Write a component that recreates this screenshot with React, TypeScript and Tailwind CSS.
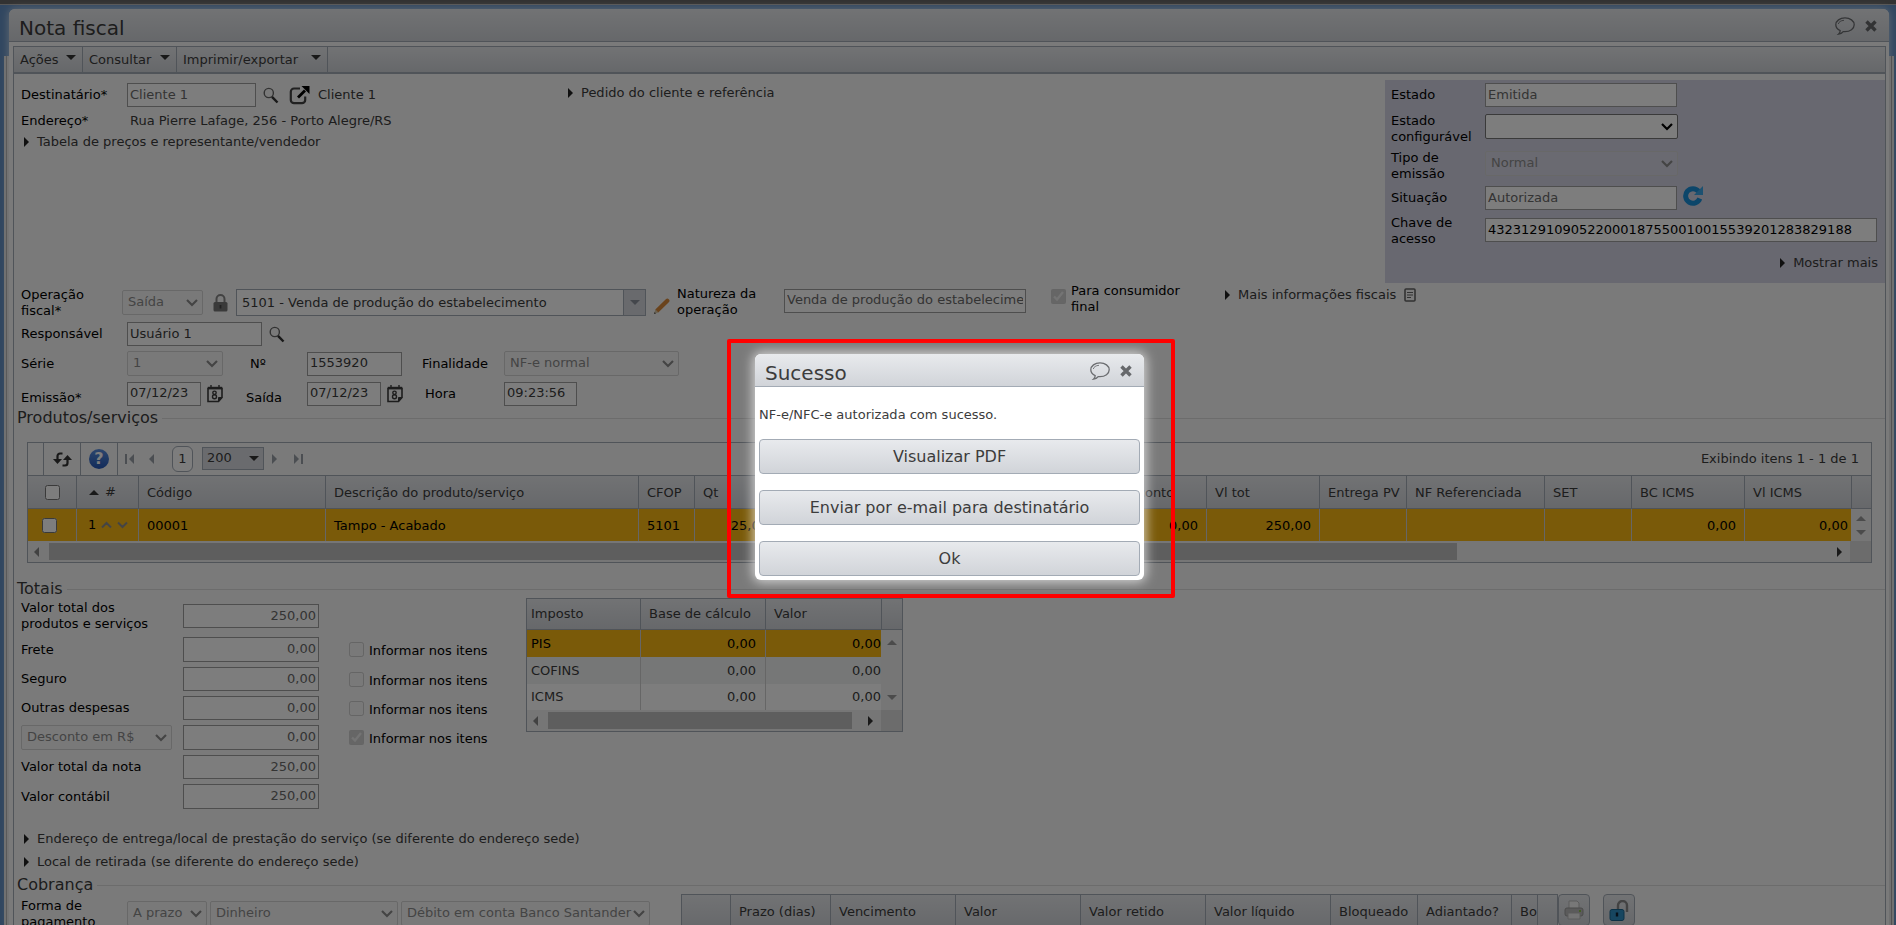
import { ReactNode, SelectHTMLAttributes, InputHTMLAttributes } from "react"
import { clsx } from "clsx"

const HEADER_BG = "bg-linear-to-b from-[#e8eaed] to-[#d1d4d9]"

/* ---------- icons ---------- */

function ChatIcon() {
  return (
    <svg width="20" height="18" viewBox="0 0 20 18" fill="none" stroke="#6b6d70" strokeWidth="1.3" aria-hidden="true">
      <path d="M5.2 13.6C2.4 12.3.8 10.300.8 7.800.8 3.900 4.900.9 10 .9s9.200 3 9.200 6.900-4.100 6.900-9.200 6.900c-.6 0-1.200 0-1.800-.1-1 1.300-2.500 2.300-4.700 2.600 1.200-1.100 1.700-2.200 1.700-3.600z" />
      <path d="M3.300 7c.4-2 2.600-3.500 5.700-3.700" strokeWidth=".9" />
    </svg>
  )
}

function CloseIcon() {
  return (
    <svg width="12" height="12" viewBox="0 0 12 12" stroke="#66686b" strokeWidth="3.4" aria-hidden="true">
      <path d="M1.500 1.500l9 9M10.500 1.500l-9 9" />
    </svg>
  )
}

function SearchIcon() {
  return (
    <svg width="16" height="17" viewBox="0 0 16 17" fill="none" aria-hidden="true">
      <circle cx="5.800" cy="6" r="4.600" stroke="#666" strokeWidth="1.400" />
      <path d="M9 9.800l5.500 5.700" stroke="#333" strokeWidth="2.400" />
    </svg>
  )
}

function ExternalIcon() {
  return (
    <svg width="21" height="19" viewBox="0 0 21 19" fill="none" aria-hidden="true">
      <path d="M11 2.500H5a3.200 3.200 0 0 0-3.200 3.200V14A3.200 3.200 0 0 0 5 17.200h8a3.200 3.200 0 0 0 3.200-3.200v-3.500" stroke="#444" strokeWidth="2.200" />
      <path d="M9 11.500l7-7" stroke="#000" strokeWidth="2.800" />
      <path d="M12.500 0H20.500V8z" fill="#000" />
    </svg>
  )
}

function CalendarIcon() {
  return (
    <svg width="16" height="18" viewBox="0 0 16 18" fill="none" stroke="#3c3c3c" aria-hidden="true">
      <path d="M1 3.500h14v9L11.500 16.500H1z" strokeWidth="1.600" />
      <path d="M.8 3h14.400" strokeWidth="2.400" />
      <path d="M4 0v4M12 0v4" strokeWidth="1.400" />
      <path d="M15 12.500h-3.500v4z" fill="#3c3c3c" />
      <circle cx="7.500" cy="7.800" r="1.700" strokeWidth="1.400" />
      <circle cx="7.500" cy="11.700" r="2" strokeWidth="1.400" />
    </svg>
  )
}

function LockIcon() {
  return (
    <svg width="15" height="18" viewBox="0 0 15 18" aria-hidden="true">
      <path d="M3.500 9V5a4 4 0 0 1 8 0v4" fill="none" stroke="#888" strokeWidth="2" />
      <rect x=".5" y="8" width="14" height="9.500" rx="1.500" fill="#777" />
      <path d="M7.500 11v3.500" stroke="#444" strokeWidth="1.800" />
    </svg>
  )
}

function PencilIcon() {
  return (
    <svg width="18" height="17" viewBox="0 0 18 17" aria-hidden="true">
      <path d="M1 16l1.300-4.500 3 3z" fill="#d8c9a8" />
      <path d="M1 16l.6-2 1.400 1.400z" fill="#555" />
      <path d="M2.300 11.500L12.800 1.200a2 2 0 0 1 3 3L5.300 14.500z" fill="#d88a3a" />
    </svg>
  )
}

function RefreshBlueIcon() {
  return (
    <svg width="20" height="20" viewBox="0 0 20 20" fill="none" aria-hidden="true">
      <path d="M15.600 5.300A7.300 7.300 0 1 0 16.800 12.500" stroke="#1a8fd8" strokeWidth="5" />
      <path d="M20 0v9h-9z" fill="#3aa5e6" />
    </svg>
  )
}

function ReloadIcon() {
  return (
    <svg width="19" height="16" viewBox="0 0 19 16" fill="none" stroke="#333" strokeWidth="2.200" aria-hidden="true">
      <path d="M9.500 2.500H7A2.500 2.500 0 0 0 4.500 5v5" />
      <path d="M0 8h9l-4.500 5z" fill="#333" stroke="none" />
      <path d="M9.500 14.500H12a2.500 2.500 0 0 0 2.500-2.500V7" />
      <path d="M10 9h9l-4.500-5z" fill="#333" stroke="none" />
    </svg>
  )
}

function HelpIcon() {
  return (
    <span className="flex size-5 items-center justify-center rounded-full bg-linear-to-b from-[#5b8fe0] to-[#2458b8] text-base font-bold leading-5 text-white">
      ?
    </span>
  )
}

function NoteIcon() {
  return (
    <svg width="12" height="14" viewBox="0 0 12 14" fill="none" stroke="#666" aria-hidden="true">
      <rect x="1" y="1" width="10" height="12" rx="1" strokeWidth="1.600" />
      <path d="M3 4.500h6M3 7h6M3 9.500h4" />
    </svg>
  )
}

function PrinterIcon() {
  return (
    <svg width="20" height="20" viewBox="0 0 20 20" aria-hidden="true">
      <path d="M5 1h8l2 2v6H5z" fill="#f4f4f4" stroke="#bbb" />
      <rect x="1" y="8" width="18" height="8" rx="2" fill="#b9b9b9" stroke="#999" />
      <path d="M4 13h12v6H4z" fill="#ededed" stroke="#bbb" />
      <rect x="15" y="10" width="2" height="2" fill="#8bc34a" />
    </svg>
  )
}

function UnlockIcon() {
  return (
    <svg width="20" height="21" viewBox="0 0 20 21" aria-hidden="true">
      <path d="M9 10V5.500a4.500 4.500 0 0 1 9 0V12" fill="none" stroke="#8a8a8a" strokeWidth="2.400" />
      <rect x="1" y="9.500" width="14" height="11" rx="2" fill="#2f8fc4" stroke="#1c6690" />
      <path d="M8 12.500v4" stroke="#123" strokeWidth="2.400" />
    </svg>
  )
}

type Dir = "up" | "down" | "left" | "right"

const TRIANGLES: Record<Dir, string> = {
  up: "M0 5h10L5 0z",
  down: "M0 0h10L5 5z",
  left: "M5 0v10L0 5z",
  right: "M0 0v10l5-5z",
}

function Triangle({ dir, color = "#333" }: { dir: Dir; color?: string }) {
  const flat = dir === "up" || dir === "down"
  return (
    <svg width={flat ? 10 : 5} height={flat ? 5 : 10} viewBox={flat ? "0 0 10 5" : "0 0 5 10"} className="shrink-0" aria-hidden="true">
      <path d={TRIANGLES[dir]} fill={color} />
    </svg>
  )
}

/* ---------- form pieces ---------- */

function TextField({ className, ...props }: InputHTMLAttributes<HTMLInputElement>) {
  return <input type="text" readOnly className={clsx("h-6 shrink-0 border border-[#a0a0a0] bg-white px-0.5 pb-0.5", className)} {...props} />
}

function Select({ className, children, disabled, ...props }: SelectHTMLAttributes<HTMLSelectElement>) {
  return (
    <span className={clsx("relative flex h-[25px] shrink-0", className)}>
      <select
        disabled={disabled}
        className="w-full appearance-none rounded-xs border border-[#767676] bg-white pb-0.5 pl-[5px] pr-4 disabled:border-[#d4d4d4] disabled:bg-[#f0f0f0]/20 disabled:text-[#8c8c8c]"
        {...props}
      >
        {children}
      </select>
      <svg width="12" height="8" viewBox="0 0 12 8" fill="none" className="pointer-events-none absolute right-[5px] top-[9px]" aria-hidden="true">
        <path d="M1 1l5 5 5-5" stroke={disabled ? "#8c8c8c" : "#000"} strokeWidth="2.200" />
      </svg>
    </span>
  )
}

function Expander({ children, className }: { children: ReactNode; className?: string }) {
  return (
    <button type="button" className={clsx("flex items-center gap-2 text-[#3c3c3c]", className)}>
      <Triangle dir="right" color="#222" />
      {children}
    </button>
  )
}

function Legend({ children, className }: { children: ReactNode; className?: string }) {
  return (
    <div className={clsx("flex h-5 items-center gap-1 pl-[3px]", className)}>
      <h2 className="text-base leading-5 text-[#3c3c3c]">{children}</h2>
      <div className="h-px flex-1 bg-[#dcdcdc]" />
    </div>
  )
}

function WindowTitle({ title }: { title: string }) {
  return (
    <header className={clsx("flex h-[33px] items-center border-b border-[#a3abb5] px-2.5 text-[#3c3c3c]", HEADER_BG)}>
      <h1 className="mt-1.5 flex-1 text-xl leading-6">{title}</h1>
      <button type="button" aria-label="Comentar" className="mr-2.5 mt-px"><ChatIcon /></button>
      <button type="button" aria-label="Fechar" className="mr-0.5 mt-px"><CloseIcon /></button>
    </header>
  )
}

function HScroll({ thumb }: { thumb: string }) {
  return (
    <div className="flex h-[21px] bg-[#f1f1f1]">
      <div className="flex flex-1 items-center pl-1.5 pr-2">
        <Triangle dir="left" color="#888" />
        <div className="ml-2.5 mr-4 flex-1">
          <div className={clsx("h-[17px] bg-[#c1c1c1]", thumb)} />
        </div>
        <Triangle dir="right" color="#333" />
      </div>
      <div className="w-[21px] bg-[#dcdcdc]" />
    </div>
  )
}

/* ---------- sections ---------- */

const MENU_ITEMS = [
  { label: "Ações", width: "w-[69px]" },
  { label: "Consultar", width: "w-[94px]" },
  { label: "Imprimir/exportar", width: "w-[151px]" },
]

function Menu() {
  return (
    <nav className={clsx("flex h-[27px] border-b-2 border-[#a3abb5] text-[#3c3c3c]", HEADER_BG)}>
      {MENU_ITEMS.map((item) => (
        <button key={item.label} type="button" className={clsx("flex items-center justify-between border-r border-[#a3abb5] px-1.5", item.width)}>
          {item.label}
          <span className="-mt-1"><Triangle dir="down" /></span>
        </button>
      ))}
    </nav>
  )
}

function StatusPanel() {
  return (
    <aside className="mt-1.5 w-[500px] bg-[#d4d4e4] pb-1 pl-1.5 pt-[3px]">
      <div className="flex h-[30px]">
        <label htmlFor="estado" className="w-[94px] leading-6">Estado</label>
        <TextField id="estado" className="w-48 text-[#6a6a6a]" defaultValue="Emitida" />
      </div>
      <div className="flex h-[37px]">
        <label htmlFor="estado-conf" className="w-[94px]">Estado<br />configurável</label>
        <Select id="estado-conf" className="mt-px w-[193px]"><option></option></Select>
      </div>
      <div className="flex h-9">
        <label htmlFor="tipo" className="w-[94px]">Tipo de<br />emissão</label>
        <Select id="tipo" disabled className="mt-px w-[193px]"><option>Normal</option></Select>
      </div>
      <div className="flex h-[29px]">
        <label htmlFor="situacao" className="w-[94px] leading-6">Situação</label>
        <TextField id="situacao" className="w-48 text-[#6a6a6a]" defaultValue="Autorizada" />
        <button type="button" aria-label="Atualizar situação" className="ml-1.5 h-5"><RefreshBlueIcon /></button>
      </div>
      <div className="flex h-8">
        <label htmlFor="chave" className="w-[94px]">Chave de<br />acesso</label>
        <TextField id="chave" className="mt-[3px] w-[392px] text-black" defaultValue="43231291090522000187550010015539201283829188" />
      </div>
      <Expander className="ml-auto mr-[7px] h-8">Mostrar mais</Expander>
    </aside>
  )
}

function Identification() {
  return (
    <section className="pl-[7px]">
      <div className="flex">
        <div className="w-[547px] pt-[9px]">
          <div className="flex h-6 items-center">
            <label htmlFor="destinatario" className="w-[106px]">Destinatário*</label>
            <TextField id="destinatario" className="w-[129px] text-[#6a6a6a]" defaultValue="Cliente 1" />
            <button type="button" aria-label="Pesquisar destinatário" className="ml-[7px]"><SearchIcon /></button>
            <button type="button" aria-label="Abrir destinatário" className="ml-2.5"><ExternalIcon /></button>
            <span className="ml-2 text-[#3c3c3c]">Cliente 1</span>
          </div>
          <div className="flex h-[27px] items-center">
            <span className="w-[109px]">Endereço*</span>
            <span className="text-[#3c3c3c]">Rua Pierre Lafage, 256 - Porto Alegre/RS</span>
          </div>
          <Expander className="ml-[3px] h-4">Tabela de preços e representante/vendedor</Expander>
        </div>
        <div className="flex-1 pt-[9px]"><Expander className="h-5">Pedido do cliente e referência</Expander></div>
        <StatusPanel />
      </div>

      <div className="mt-px flex h-[37px] items-center">
        <label htmlFor="operacao" className="w-[101px]">Operação<br />fiscal*</label>
        <Select id="operacao" disabled className="w-[81px]"><option>Saída</option></Select>
        <span className="ml-2.5"><LockIcon /></span>
        <div className="ml-2 flex h-[27px] w-[410px] shrink-0 border border-[#a3abb5] bg-white">
          <input aria-label="Operação fiscal" readOnly defaultValue="5101 - Venda de produção do estabelecimento" className="min-w-0 flex-1 px-[5px] text-[#3c3c3c]" />
          <button type="button" aria-label="Abrir lista" className="flex w-[22px] items-center justify-center border-l border-[#a3abb5] bg-[#d6d9de]">
            <Triangle dir="down" color="#8c929c" />
          </button>
        </div>
        <button type="button" aria-label="Editar" className="ml-[7px] mt-2"><PencilIcon /></button>
        <label htmlFor="natureza" className="-mt-0.5 ml-1.5 w-[107px]">Natureza da<br />operação</label>
        <TextField id="natureza" className="-mt-1 w-[242px] text-[#6a6a6a]" defaultValue="Venda de produção do estabelecimento" />
        <input id="consumidor" type="checkbox" defaultChecked disabled className="-mt-3 ml-[25px] size-[15px]" />
        <label htmlFor="consumidor" className="-mt-2 ml-[5px] w-[154px]">Para consumidor<br />final</label>
        <Expander className="h-[22px] self-start">Mais informações fiscais</Expander>
        <span className="ml-2 mt-1 self-start"><NoteIcon /></span>
      </div>

      <div className="mt-px flex h-6 items-center">
        <label htmlFor="responsavel" className="w-[106px]">Responsável</label>
        <TextField id="responsavel" className="w-[135px] text-[#3c3c3c]" defaultValue="Usuário 1" />
        <button type="button" aria-label="Pesquisar responsável" className="ml-[7px]"><SearchIcon /></button>
      </div>

      <div className="mt-[5px] flex h-[25px] items-center">
        <label htmlFor="serie" className="w-[106px]">Série</label>
        <Select id="serie" disabled className="w-24"><option>1</option></Select>
        <label htmlFor="numero" className="ml-[27px] w-[57px]">Nº</label>
        <TextField id="numero" className="w-[95px] text-[#3c3c3c]" defaultValue="1553920" />
        <label htmlFor="finalidade" className="ml-5 w-[82px]">Finalidade</label>
        <Select id="finalidade" disabled className="w-[175px]"><option>NF-e normal</option></Select>
      </div>

      <div className="mt-[5px] flex h-[25px] items-center">
        <label htmlFor="emissao" className="mt-2 w-[106px]">Emissão*</label>
        <TextField id="emissao" className="w-[74px] text-[#3c3c3c]" defaultValue="07/12/23" />
        <button type="button" aria-label="Calendário de emissão" className="ml-1.5"><CalendarIcon /></button>
        <label htmlFor="saida" className="ml-[23px] mt-2 w-[61px]">Saída</label>
        <TextField id="saida" className="w-[74px] text-[#3c3c3c]" defaultValue="07/12/23" />
        <button type="button" aria-label="Calendário de saída" className="ml-1.5"><CalendarIcon /></button>
        <label htmlFor="hora" className="ml-[22px] w-[79px]">Hora</label>
        <TextField id="hora" className="w-[73px] text-[#3c3c3c]" defaultValue="09:23:56" />
      </div>
    </section>
  )
}

const PRODUCT_COLUMNS = [
  { width: "w-[187px]", title: "Código", value: "00001" },
  { width: "w-auto", title: "Descrição do produto/serviço", value: "Tampo - Acabado" },
  { width: "w-[56px]", title: "CFOP", value: "5101" },
  { width: "w-[82px]", title: "Qt", value: "25,00", numeric: true },
  { width: "w-[164px]", title: "", value: "" },
  { width: "w-[164px]", title: "", value: "" },
  { width: "w-[102px]", title: "Desconto", value: "0,00", numeric: true },
  { width: "w-[113px]", title: "Vl tot", value: "250,00", numeric: true },
  { width: "w-[87px]", title: "Entrega PV", value: "" },
  { width: "w-[138px]", title: "NF Referenciada", value: "" },
  { width: "w-[87px]", title: "SET", value: "" },
  { width: "w-[113px]", title: "BC ICMS", value: "0,00", numeric: true },
  { width: "w-[107px]", title: "Vl ICMS", value: "0,00", numeric: true, last: true },
]

function Products() {
  return (
    <section className="mx-[13px] mt-3.5 border border-[#a3abb5] text-[#3c3c3c]">
      <div className="flex h-8 items-center">
        <div className="h-full w-4 border-r border-[#a3abb5]" />
        <button type="button" aria-label="Recarregar" className="flex h-full w-[37px] items-center justify-center border-r border-[#a3abb5]"><ReloadIcon /></button>
        <button type="button" aria-label="Ajuda" className="flex h-full w-[37px] items-center justify-center border-r border-[#a3abb5]"><HelpIcon /></button>
        <button type="button" aria-label="Primeira página" className="ml-[7px] flex gap-0.5"><span className="h-2.5 w-0.5 bg-[#9aa0a8]" /><Triangle dir="left" color="#9aa0a8" /></button>
        <button type="button" aria-label="Página anterior" className="ml-[15px]"><Triangle dir="left" color="#9aa0a8" /></button>
        <span className="ml-[18px] flex h-[26px] w-[21px] items-center justify-center rounded-md border border-[#a3abb5] bg-white">1</span>
        <button type="button" className="-mt-0.5 ml-[9px] flex h-[23px] w-[62px] items-center justify-between border border-[#a3abb5] bg-[#d8dbe0] px-1">
          200
          <Triangle dir="down" />
        </button>
        <button type="button" aria-label="Próxima página" className="ml-2"><Triangle dir="right" color="#9aa0a8" /></button>
        <button type="button" aria-label="Última página" className="ml-[17px] flex gap-0.5"><Triangle dir="right" color="#9aa0a8" /><span className="h-2.5 w-0.5 bg-[#9aa0a8]" /></button>
        <span className="ml-auto mr-3">Exibindo itens 1 - 1 de 1</span>
      </div>
      <table className="w-full table-fixed border-separate border-spacing-0 whitespace-nowrap">
        <thead>
          <tr className={clsx("h-[34px]", HEADER_BG)}>
            <th className="w-12 border-y border-[#a3abb5]"><input type="checkbox" aria-label="Selecionar todos" className="mx-auto block size-[15px]" /></th>
            <th className="w-[62px] border-y border-l border-[#a3abb5] font-normal">
              <span className="flex items-center gap-1.5 pl-3"><Triangle dir="up" /> #</span>
            </th>
            {PRODUCT_COLUMNS.map((col, i) => (
              <th key={i} className={clsx("overflow-hidden border-y border-l border-[#a3abb5] pl-2 pt-0.5 text-left font-normal", col.width)}>{col.title}</th>
            ))}
            <th className="w-5 border-y border-l border-[#a3abb5]" />
          </tr>
        </thead>
        <tbody>
          <tr className="h-8 text-black">
            <td className="bg-[#f8b814]"><input type="checkbox" aria-label="Selecionar item 1" className="ml-3.5 block size-[15px]" /></td>
            <td className="border-l border-[#d0d0d0] bg-[#f8b814]">
              <span className="flex items-center gap-1 pl-[11px]">
                1
                <svg width="28" height="8" viewBox="0 0 28 8" fill="none" stroke="#8c8c8c" strokeWidth="2" aria-hidden="true">
                  <path d="M2 6.500l4.500-4.500 4.500 4.500M18 1.500l4.500 4.500 4.500-4.500" />
                </svg>
              </span>
            </td>
            {PRODUCT_COLUMNS.map((col, i) => (
              <td key={i} className={clsx("border-l border-[#d0d0d0] bg-[#f8b814] pt-0.5", col.numeric ? "text-right" : "pl-2", col.numeric && (col.last ? "pr-[3px]" : "pr-2"))}>{col.value}</td>
            ))}
            <td className="bg-[#f1f1f1]">
              <span className="flex flex-col items-center gap-[9px]"><Triangle dir="up" color="#999" /><Triangle dir="down" color="#999" /></span>
            </td>
          </tr>
        </tbody>
      </table>
      <HScroll thumb="w-[calc(80%-10px)]" />
    </section>
  )
}

const TOTALS = [
  { id: "frete", label: "Frete", value: "0,00", height: "h-[25px]", check: true },
  { id: "seguro", label: "Seguro", value: "0,00", height: "h-6", check: true },
  { id: "outras", label: "Outras despesas", value: "0,00", height: "h-6", check: true },
  { id: "desconto", label: "Desconto em R$", value: "0,00", height: "h-[25px]", check: true, select: true },
  { id: "total-nota", label: "Valor total da nota", value: "250,00", height: "h-6" },
  { id: "contabil", label: "Valor contábil", value: "250,00", height: "h-[25px]" },
]

const TAXES = [
  { name: "PIS", row: "h-[27px] bg-[#f8b814] text-black" },
  { name: "COFINS", row: "h-[27px] bg-[#f0f2f2]" },
  { name: "ICMS", row: "h-[26px] bg-white" },
]

function Totals() {
  return (
    <section className="flex items-start pl-[7px]">
      <div className="flex w-[505px] flex-col gap-[5px] pt-px">
        <div className="flex h-8 items-center">
          <label htmlFor="total-produtos" className="w-[162px]">Valor total dos<br />produtos e serviços</label>
          <TextField id="total-produtos" className="w-[136px] text-right text-[#6a6a6a]" defaultValue="250,00" />
        </div>
        {TOTALS.map((row) => (
          <div key={row.id} className={clsx("flex items-center", row.height)}>
            {row.select ? (
              <div className="w-[162px]">
                <Select aria-label="Tipo de desconto" disabled className="w-[151px]"><option>{row.label}</option></Select>
              </div>
            ) : (
              <label htmlFor={row.id} className="w-[162px]">{row.label}</label>
            )}
            <TextField id={row.id} aria-label={row.label} className={clsx("w-[136px] text-right text-[#6a6a6a]", row.height)} defaultValue={row.value} />
            {row.check && (
              <label className="ml-[30px] flex items-center gap-[5px]">
                <input type="checkbox" disabled defaultChecked={row.select} className="size-[15px]" />
                <span className="mt-[3px]">Informar nos itens</span>
              </label>
            )}
          </div>
        ))}
      </div>

      <div className="-mt-px w-[377px] border border-[#a3abb5]">
        <div className="flex">
          <table className="flex-1 table-fixed border-separate border-spacing-0 text-[#3c3c3c]">
            <thead>
              <tr className={clsx("h-[31px] text-left", HEADER_BG)}>
                <th className="w-[113px] border-b border-[#a3abb5] pl-1 font-normal">Imposto</th>
                <th className="w-[125px] border-b border-l border-[#a3abb5] pl-2 font-normal">Base de cálculo</th>
                <th className="border-b border-l border-[#a3abb5] pl-2 font-normal">Valor</th>
              </tr>
            </thead>
            <tbody>
              {TAXES.map((tax) => (
                <tr key={tax.name} className={tax.row}>
                  <td className="pl-1">{tax.name}</td>
                  <td className="border-l border-[#d0d0d0] pr-[9px] text-right">0,00</td>
                  <td className="border-l border-[#d0d0d0] text-right">0,00</td>
                </tr>
              ))}
            </tbody>
          </table>
          <div className="flex w-[21px] flex-col bg-[#f1f1f1]">
            <div className={clsx("h-[31px] border-b border-l border-[#a3abb5]", HEADER_BG)} />
            <div className="flex flex-1 flex-col items-center justify-between py-2.5">
              <Triangle dir="up" color="#999" />
              <Triangle dir="down" color="#999" />
            </div>
          </div>
        </div>
        <HScroll thumb="w-full" />
      </div>
    </section>
  )
}

const BILLING_COLUMNS = [
  { width: "w-12", title: "" },
  { width: "w-[100px]", title: "Prazo (dias)" },
  { width: "w-[125px]", title: "Vencimento" },
  { width: "w-[125px]", title: "Valor" },
  { width: "w-[125px]", title: "Valor retido" },
  { width: "w-[125px]", title: "Valor líquido" },
  { width: "w-[87px]", title: "Bloqueado" },
  { width: "w-[94px]", title: "Adiantado?" },
  { width: "w-[26px]", title: "Bo" },
  { width: "w-5", title: "" },
]

function Billing() {
  return (
    <section className="flex items-start pl-[7px]">
      <label htmlFor="forma" className="mt-[3px] w-[106px]">Forma de<br />pagamento</label>
      <div className="mt-1.5 flex w-[554px] gap-[3px]">
        <Select id="forma" disabled className="w-20"><option>A prazo</option></Select>
        <Select aria-label="Meio de pagamento" disabled className="w-[188px]"><option>Dinheiro</option></Select>
        <Select aria-label="Conta" disabled className="w-[249px]"><option>Débito em conta Banco Santander</option></Select>
      </div>
      <table className="-mt-px w-[877px] table-fixed border-separate border-spacing-0 whitespace-nowrap border border-[#a3abb5] text-[#3c3c3c]">
        <thead>
          <tr className={clsx("h-[34px]", HEADER_BG)}>
            {BILLING_COLUMNS.map((col, i) => (
              <th key={i} className={clsx("overflow-hidden text-left font-normal", i > 0 && "border-l border-[#a3abb5] pl-2", col.width)}>{col.title}</th>
            ))}
          </tr>
        </thead>
      </table>
      <button type="button" aria-label="Imprimir" className={clsx("-mt-px flex size-8 items-center justify-center rounded-sm border border-[#a3abb5]", HEADER_BG)}><PrinterIcon /></button>
      <button type="button" aria-label="Desbloquear" className={clsx("-mt-px ml-[13px] flex size-8 items-center justify-center rounded-sm border border-[#a3abb5]", HEADER_BG)}><UnlockIcon /></button>
    </section>
  )
}

function SuccessDialog() {
  return (
    <div className="absolute inset-0 flex items-center justify-center bg-black/51 pl-1.5 pt-3">
      <div className="rounded-xs border-4 border-[#f00] pb-3.5 pl-6 pr-[27px] pt-[11px]">
        <div role="dialog" aria-label="Sucesso" className="w-[389px] overflow-hidden rounded-md bg-white shadow-[0_0_12px_2px_rgba(255,255,255,0.7)]">
          <WindowTitle title="Sucesso" />
          <div className="flex flex-col gap-4 px-1 pb-1">
            <p className="mt-5 text-[#3c3c3c]">NF-e/NFC-e autorizada com sucesso.</p>
            {["Visualizar PDF", "Enviar por e-mail para destinatário", "Ok"].map((action) => (
              <button key={action} type="button" className={clsx("h-[35px] rounded-sm border border-[#a3abb5] text-base text-[#3c3c3c]", HEADER_BG)}>{action}</button>
            ))}
          </div>
        </div>
      </div>
    </div>
  )
}

export default function App() {
  return (
    <div className="relative flex h-screen flex-col overflow-hidden bg-[#6390c4] font-['DejaVu_Sans',Verdana,sans-serif] text-[13px] leading-4 text-black">
      <div className="h-[5px] shrink-0 border-b border-[#b0b0b0] bg-[#666]" />
      <div className="flex min-h-0 flex-1">
        <div className="ml-1 mt-[51px] w-[5px] border-x-2 border-[#e4e4e4] bg-[#a8a8a8]" />
        <main className="mt-1 min-w-0 flex-1 overflow-hidden rounded-t-md bg-[#f9f9f9] shadow-[0_0_8px_#ffffffaa]">
          <WindowTitle title="Nota fiscal" />
          <div className="ml-1 mr-[3px] mt-1 border border-b-0 border-[#a3abb5]">
            <Menu />
            <Identification />
            <Legend className="mt-0.5">Produtos/serviços</Legend>
            <Products />
            <Legend className="mt-4">Totais</Legend>
            <Totals />
            <div className="mt-[18px] pl-2.5">
              <Expander className="h-[23px]">Endereço de entrega/local de prestação do serviço (se diferente do endereço sede)</Expander>
              <Expander className="h-[23px]">Local de retirada (se diferente do endereço sede)</Expander>
            </div>
            <Legend className="mt-0.5">Cobrança</Legend>
            <Billing />
          </div>
        </main>
        <div className="mr-0.5 mt-[51px] w-[5px] border-x-2 border-[#e4e4e4] bg-[#a8a8a8]" />
      </div>
      <SuccessDialog />
    </div>
  )
}
